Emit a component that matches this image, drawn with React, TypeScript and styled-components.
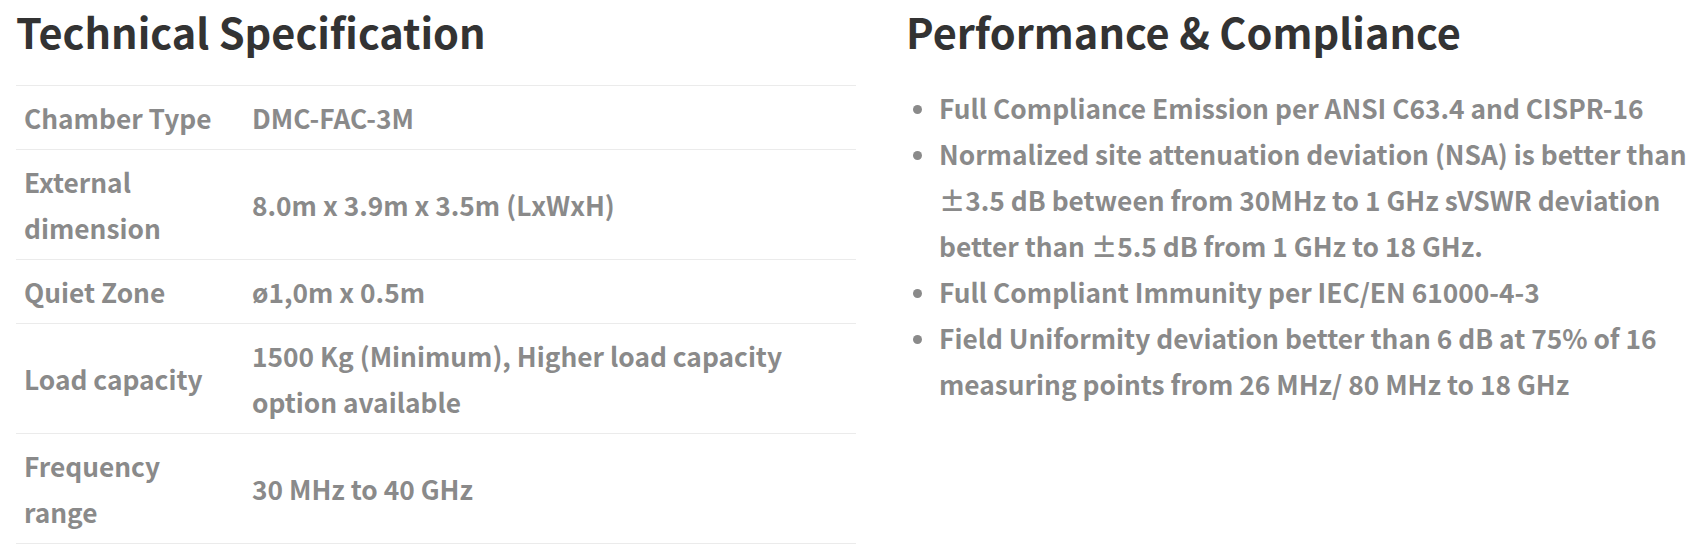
import React from "react";
import styled, { createGlobalStyle } from "styled-components";

const GlobalStyle = createGlobalStyle`
  html, body { margin: 0; padding: 0; background: #ffffff; }
  body { font-family: "Noto Sans CJK SC", "Lato", sans-serif; }
`;

const Page = styled.div`
  display: grid;
  grid-template-columns: 840px 1fr;
  column-gap: 50px;
  padding: 0 8px 0 16px;
  width: 1708px;
  box-sizing: border-box;
`;

const Column = styled.section`
  display: flex;
  flex-direction: column;
  min-width: 0;
`;

const Heading = styled.h2`
  margin: 4px 0 26px;
  font-size: 41.5px;
  line-height: 55px;
  font-weight: 700;
  color: #333333;
`;

const SpecTable = styled.table`
  width: 100%;
  border-collapse: collapse;
  table-layout: fixed;
`;

const SpecRow = styled.tr`
  border-top: 1px solid #ebebeb;
  &:last-child { border-bottom: 1px solid #ebebeb; }
`;

const Cell = styled.td<{ $label?: boolean }>`
  width: ${(p) => (p.$label ? "194px" : "auto")};
  padding: 8.5px ${(p) => (p.$label ? "26px" : "8px")} 8.5px 8px;
  vertical-align: middle;
  font-size: 26.3px;
  line-height: 46px;
  font-weight: 600;
  color: #8a8a8a;
`;

const List = styled.ul`
  list-style: none;
  margin: 0;
  padding: 0;
`;

const Item = styled.li`
  display: flex;
  align-items: flex-start;
  font-size: 26.3px;
  line-height: 46px;
  font-weight: 600;
  color: #8a8a8a;
`;

const Bullet = styled.span`
  flex: none;
  width: 9px;
  height: 9px;
  border-radius: 50%;
  background: #8a8a8a;
  margin: 20px 17px 0 7px;
`;

const specs: [string, string][] = [
  ["Chamber Type", "DMC-FAC-3M"],
  ["External dimension", "8.0m x 3.9m x 3.5m (LxWxH)"],
  ["Quiet Zone", "ø1,0m x 0.5m"],
  ["Load capacity", "1500 Kg (Minimum), Higher load capacity option available"],
  ["Frequency range", "30 MHz to 40 GHz"],
];

const points = [
  "Full Compliance Emission per ANSI C63.4 and CISPR-16",
  "Normalized site attenuation deviation (NSA) is better than ±3.5 dB between from 30MHz to 1 GHz sVSWR deviation better than ±5.5 dB from 1 GHz to 18 GHz.",
  "Full Compliant Immunity per IEC/EN 61000-4-3",
  "Field Uniformity deviation better than 6 dB at 75% of 16 measuring points from 26 MHz/ 80 MHz to 18 GHz",
];

export default function App() {
  return (
    <>
      <GlobalStyle />
      <Page>
        <Column>
          <Heading>Technical Specification</Heading>
          <SpecTable>
            <tbody>
              {specs.map(([k, v]) => (
                <SpecRow key={k}>
                  <Cell $label>{k}</Cell>
                  <Cell>{v}</Cell>
                </SpecRow>
              ))}
            </tbody>
          </SpecTable>
        </Column>
        <Column>
          <Heading>Performance &amp; Compliance</Heading>
          <List>
            {points.map((p) => (
              <Item key={p}>
                <Bullet />
                <span>{p}</span>
              </Item>
            ))}
          </List>
        </Column>
      </Page>
    </>
  );
}
